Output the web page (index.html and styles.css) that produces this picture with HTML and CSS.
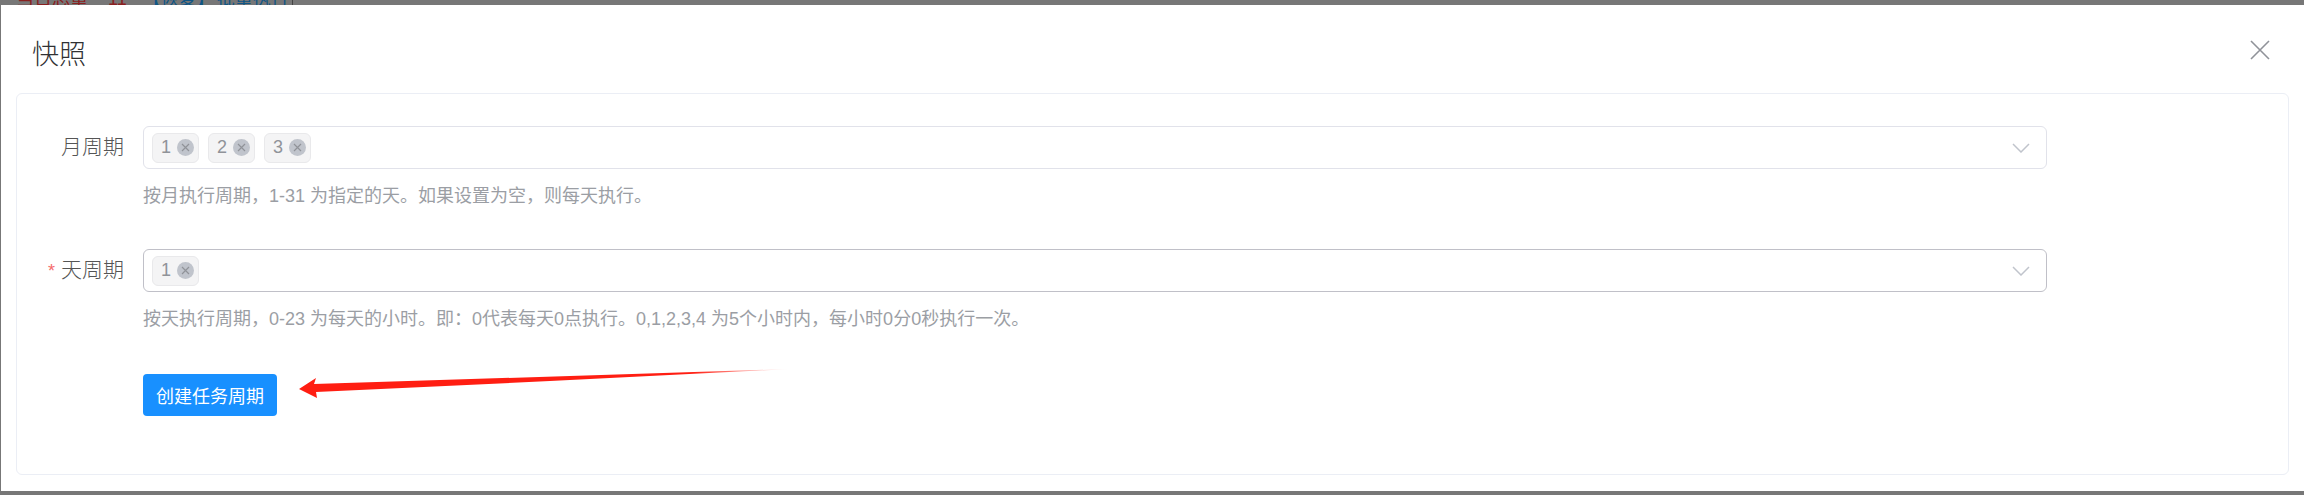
FILE: index.html
```html
<!DOCTYPE html>
<html lang="zh-CN">
<head>
  <meta charset="UTF-8">
  <title>快照</title>
  <link rel="stylesheet" href="styles.css">
</head>
<body>
  <div class="behind">
    <div class="behind-text">
      <span class="red">当日总量</span>
      <span class="red count">11</span>
      <span class="blue action">【恢复】</span>
      <span class="blue">批量执行</span>
    </div>
  </div>

  <div class="dialog">
    <div class="dialog-header">
      <span class="dialog-title">快照</span>
      <svg class="close-icon" width="20" height="20" viewBox="0 0 20 20">
        <path d="M1 1L19 19M19 1L1 19" stroke="#909399" stroke-width="1.6" fill="none"/>
      </svg>
    </div>

    <div class="card">
      <div class="form-row">
        <label class="form-label">月周期</label>
        <div class="form-field">
          <div class="select">
            <span class="tag">1<i class="tag-close"><svg width="17" height="17" viewBox="0 0 17 17"><path d="M5 5L12 12M12 5L5 12" stroke="#909399" stroke-width="1.2"/></svg></i></span>
            <span class="tag">2<i class="tag-close"><svg width="17" height="17" viewBox="0 0 17 17"><path d="M5 5L12 12M12 5L5 12" stroke="#909399" stroke-width="1.2"/></svg></i></span>
            <span class="tag">3<i class="tag-close"><svg width="17" height="17" viewBox="0 0 17 17"><path d="M5 5L12 12M12 5L5 12" stroke="#909399" stroke-width="1.2"/></svg></i></span>
            <svg class="arrow-down" width="18" height="10" viewBox="0 0 18 10"><path d="M1 1L9 9L17 1" stroke="#c0c4cc" stroke-width="1.5" fill="none"/></svg>
          </div>
          <p class="help">按月执行周期，1-31 为指定的天。如果设置为空，则每天执行。</p>
        </div>
      </div>

      <div class="form-row">
        <label class="form-label"><span class="star">*</span>天周期</label>
        <div class="form-field">
          <div class="select select-hover">
            <span class="tag">1<i class="tag-close"><svg width="17" height="17" viewBox="0 0 17 17"><path d="M5 5L12 12M12 5L5 12" stroke="#909399" stroke-width="1.2"/></svg></i></span>
            <svg class="arrow-down" width="18" height="10" viewBox="0 0 18 10"><path d="M1 1L9 9L17 1" stroke="#c0c4cc" stroke-width="1.5" fill="none"/></svg>
          </div>
          <p class="help">按天执行周期，0-23 为每天的小时。即：0代表每天0点执行。0,1,2,3,4 为5个小时内，每小时0分0秒执行一次。</p>
        </div>
      </div>

      <div class="form-row submit-row">
        <span></span>
        <div class="form-field">
          <button class="btn-primary" type="button">创建任务周期</button>
        </div>
      </div>
    </div>

    <!-- red arrow drawn on top of the screenshot -->
    <svg class="annotation" width="520" height="50" viewBox="0 0 520 50">
      <defs>
        <linearGradient id="tail" x1="0" x2="1" y1="0" y2="0">
          <stop offset="0" stop-color="#ff1e12"/>
          <stop offset="0.8" stop-color="#ff1e12"/>
          <stop offset="1" stop-color="#ff1e12" stop-opacity="0"/>
        </linearGradient>
      </defs>
      <path d="M9 34L26 23L24 29L500 14L260 26L26 37L27 43Z" fill="url(#tail)"/>
    </svg>
  </div>
</body>
</html>
```

FILE: styles.css
```css
* {
  box-sizing: border-box;
}
html, body {
  height: 495px;
}
body {
  margin: 0;
  overflow: hidden;
  background-color: #777;
  font-family: "Liberation Sans", "Noto Sans CJK SC", sans-serif;
  color: #606266;
}
.behind {
  height: 5px;
  overflow: hidden;
}
.behind-text {
  display: flex;
  width: 293px;
  height: 24px;
  margin-top: -13px;
  padding-left: 16px;
  font-size: 18px;
  line-height: 24px;
  border-right: 1px solid #444;
}
.red {
  color: #8a2020;
}
.blue {
  color: #0f5585;
}
.count {
  margin-left: 20px;
}
.action {
  margin-left: 16px;
  margin-right: 2px;
}
.dialog {
  position: relative;
  margin-left: 1px;
  height: 486px;
  padding-bottom: 16px;
  background-color: #fff;
  display: flex;
  flex-direction: column;
}
.dialog-header {
  height: 88px;
  padding: 6px 34px 0 31px;
  display: flex;
  align-items: center;
  justify-content: space-between;
}
.dialog-title {
  font-size: 27px;
  font-weight: 300;
  color: #303133;
}
.close-icon {
  margin-top: -4px;
}
.card {
  flex: 1;
  margin: 0 15px;
  padding-top: 32px;
  border: 1px solid #ebeef5;
  border-radius: 6px;
}
.form-row {
  display: grid;
  grid-template-columns: 107px 1904px;
  column-gap: 19px;
  margin-bottom: 39px;
}
.form-label {
  height: 43px;
  line-height: 41px;
  font-size: 21px;
  font-weight: 300;
  color: #555;
  text-align: right;
  white-space: nowrap;
}
.star {
  color: #f56c6c;
  font-size: 18px;
  margin-right: 6px;
}
.select {
  height: 43px;
  padding: 0 8px;
  display: flex;
  align-items: center;
  gap: 9px;
  border: 1px solid #e1e2ea;
  border-radius: 6px;
}
.select-hover {
  border-color: #c0c0c8;
}
.tag {
  height: 30px;
  padding: 0 4px 0 8px;
  display: inline-flex;
  align-items: center;
  gap: 6px;
  font-size: 18px;
  color: #909399;
  background-color: #f4f4f5;
  border: 1px solid #e9e9eb;
  border-radius: 6px;
}
.tag-close {
  width: 17px;
  height: 17px;
  display: block;
  border-radius: 50%;
  background-color: #c0c4cc;
}
.tag-close svg {
  display: block;
}
.arrow-down {
  margin-left: auto;
  margin-right: 8px;
}
.help {
  margin: 14px 0 0;
  font-size: 18px;
  line-height: 27px;
  color: #9b9ea4;
  white-space: nowrap;
}
.submit-row {
  margin-top: 41px;
  margin-bottom: 0;
}
.btn-primary {
  width: 134px;
  height: 42px;
  padding: 0;
  font-family: inherit;
  font-size: 18px;
  color: #fff;
  background-color: #1890ff;
  border: none;
  border-radius: 4px;
}
.annotation {
  position: absolute;
  left: 289px;
  top: 350px;
}
```
